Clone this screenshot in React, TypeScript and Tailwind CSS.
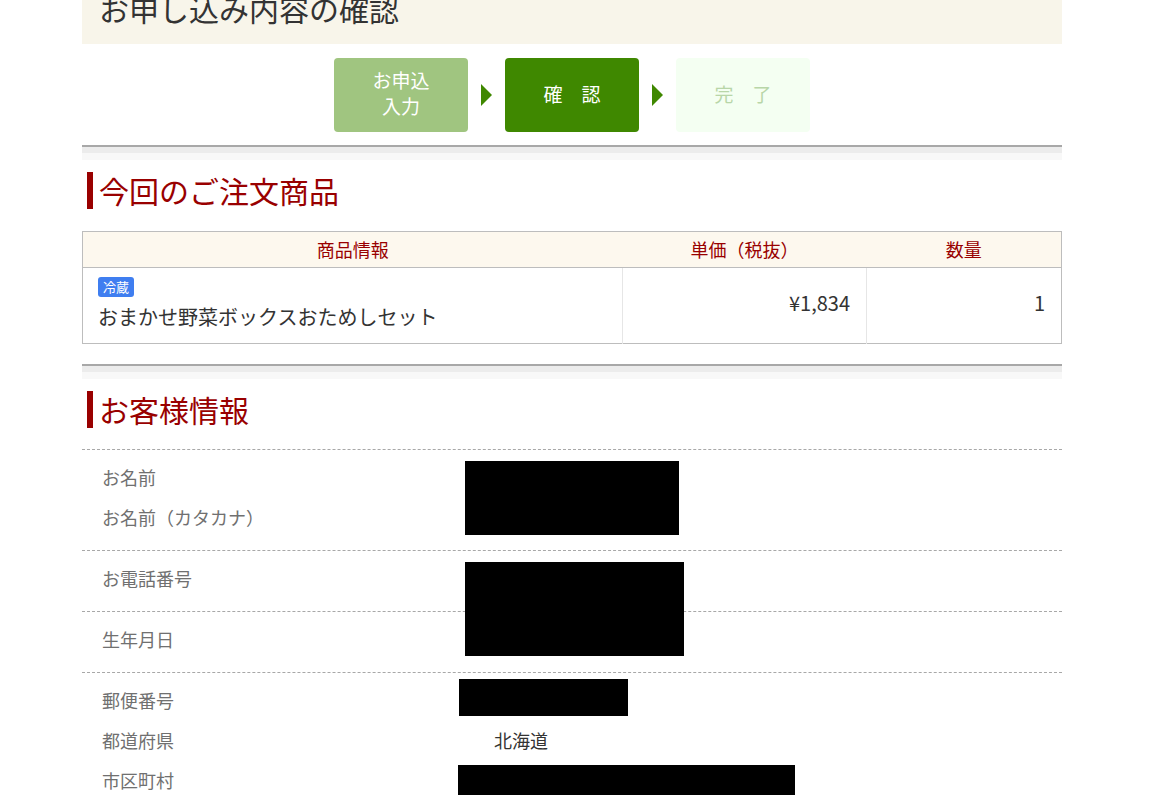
const font = {
  fontFamily: '"Noto Sans CJK JP", "Noto Sans", sans-serif',
};

function Separator() {
  return (
    <div className="border-t-2 border-[#a8a8a8]">
      <div className="h-[6px] bg-[#ececec]" />
      <div className="h-[7px] bg-[#f8f8f8]" />
    </div>
  );
}

function Heading({ children }: { children: React.ReactNode }) {
  return (
    <h2 className="ml-[5px] border-l-[6px] border-[#990000] pl-[6px] text-[30px] leading-[37px] text-[#990000]">
      {children}
    </h2>
  );
}

function Arrow() {
  return (
    <svg width="11" height="22" viewBox="0 0 11 22" className="shrink-0">
      <polygon points="0,0 11,11 0,22" fill="#3f8800" />
    </svg>
  );
}

function Label({ children }: { children: React.ReactNode }) {
  return <div className="h-10 leading-10 text-[18px] text-[#707070]">{children}</div>;
}

export default function App() {
  return (
    <div className="min-h-screen bg-white text-[#333]" style={font}>
      <div className="ml-[82px] w-[980px]">
        {/* page title bar */}
        <div className="h-[44px] overflow-hidden bg-[#f8f5ea] pl-[17px]">
          <h1 className="mt-[-12px] text-[30px] leading-[40px] text-[#333]">
            お申し込み内容の確認
          </h1>
        </div>

        {/* steps */}
        <div className="mt-[14px] flex items-center justify-center gap-[13px]">
          <div className="flex h-[74px] w-[134px] flex-col items-center justify-center rounded-[4px] bg-[#a0c580] pb-[4px] text-[19px] leading-[26px] text-white">
            <span>お申込</span>
            <span>入力</span>
          </div>
          <Arrow />
          <div className="flex h-[74px] w-[134px] items-center justify-center rounded-[4px] bg-[#3f8800] pb-[2px] text-[19px] text-white">
            確　認
          </div>
          <Arrow />
          <div className="flex h-[74px] w-[134px] items-center justify-center rounded-[4px] bg-[#f4fff2] pb-[2px] text-[19px] text-[#b8d6a8]">
            完　了
          </div>
        </div>

        <div className="mt-[13px]">
          <Separator />
        </div>

        <div className="mt-[12px]">
          <Heading>今回のご注文商品</Heading>
        </div>

        {/* order table */}
        <table className="mt-[22px] w-full border-collapse border border-[#bdbdbd]">
          <thead>
            <tr className="h-[36px] bg-[#fdf8ee] text-[18px] leading-[24px] text-[#990000]">
              <th className="w-[540px] border-b border-[#bdbdbd] pb-[2px] font-normal">商品情報</th>
              <th className="w-[244px] border-b border-[#bdbdbd] pb-[2px] font-normal">単価（税抜）</th>
              <th className="border-b border-[#bdbdbd] pb-[2px] font-normal">数量</th>
            </tr>
          </thead>
          <tbody>
            <tr className="text-[20px] leading-[28px] text-[#333]">
              <td className="px-[15px] pb-[12px] pt-[9px] align-top">
                <div className="w-fit rounded-[3px] bg-[#3f7ef0] px-[5px] text-[13px] leading-[20px] text-white">
                  冷蔵
                </div>
                <div className="mt-[6px] leading-[28px]">おまかせ野菜ボックスおためしセット</div>
              </td>
              <td className="border-l border-[#e6e6e6] pb-[6px] pr-[16px] text-right align-middle">¥1,834</td>
              <td className="border-l border-[#e6e6e6] pb-[6px] pr-[16px] text-right align-middle">1</td>
            </tr>
          </tbody>
        </table>

        <div className="mt-[20px]">
          <Separator />
        </div>

        <div className="mt-[12px]">
          <Heading>お客様情報</Heading>
        </div>

        {/* customer info */}
        <div className="relative mt-[21px] border-t border-dashed border-[#a8a8a8]">
          <div className="grid grid-cols-[392px_1fr] border-b border-dashed border-[#a8a8a8] pb-[13px] pl-[20px] pt-[7px]">
            <div>
              <Label>お名前</Label>
              <Label>お名前（カタカナ）</Label>
            </div>
            <div />
          </div>
          <div className="grid grid-cols-[392px_1fr] border-b border-dashed border-[#a8a8a8] pb-[13px] pl-[20px] pt-[7px]">
            <Label>お電話番号</Label>
            <div />
          </div>
          <div className="grid grid-cols-[392px_1fr] border-b border-dashed border-[#a8a8a8] pb-[13px] pl-[20px] pt-[7px]">
            <Label>生年月日</Label>
            <div />
          </div>
          <div className="grid grid-cols-[392px_1fr] pl-[20px] pt-[7px]">
            <div>
              <Label>郵便番号</Label>
              <Label>都道府県</Label>
              <Label>市区町村</Label>
            </div>
            <div className="pt-10">
              <div className="h-10 text-[18px] leading-10 text-[#333]">北海道</div>
            </div>
          </div>

          {/* redaction blocks */}
          <div className="absolute left-[383px] top-[11px] h-[74px] w-[214px] bg-black" />
          <div className="absolute left-[383px] top-[112px] h-[94px] w-[219px] bg-black" />
          <div className="absolute left-[377px] top-[229px] h-[37px] w-[169px] bg-black" />
          <div className="absolute left-[376px] top-[315px] h-[30px] w-[337px] bg-black" />
        </div>
      </div>
    </div>
  );
}
